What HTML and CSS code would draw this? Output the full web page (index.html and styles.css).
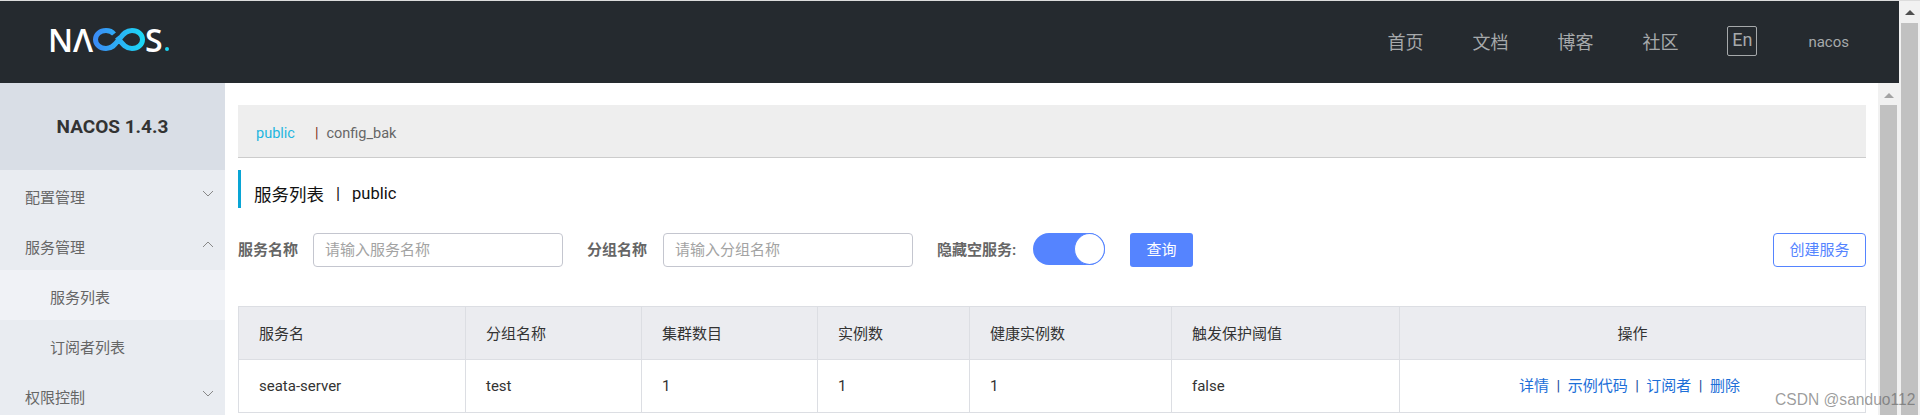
FILE: index.html
```html
<!DOCTYPE html>
<html lang="zh-CN">
<head>
<meta charset="UTF-8" />
<meta name="viewport" content="width=device-width, initial-scale=1" />
<title>Nacos</title>
<link rel="stylesheet" href="styles.css">
</head>
<body>
  <div class="app">
    <header class="topbar">
      <div class="logo">
        <span class="logo-letters">NΛ</span>
        <svg class="logo-loop" width="52" height="23" viewBox="0 0 52 23" aria-hidden="true">
          <defs>
            <linearGradient id="loopGrad" x1="0" y1="0" x2="1" y2="0">
              <stop offset="0" stop-color="#3b8cf5" />
              <stop offset="1" stop-color="#1cd6f5" />
            </linearGradient>
          </defs>
          <path d="M21 6C19 3.500 16.500 2.500 13 2.500C7 2.500 2.500 6.500 2.500 11.500C2.500 16.500 7 20.500 13 20.500C20 20.500 23 15 26 11.500C29 8 32 2.500 39 2.500C45 2.500 49.500 6.500 49.500 11.500C49.500 16.500 45 20.500 39 20.500C32 20.500 29 15 24 9" fill="none" stroke="url(#loopGrad)" stroke-width="5" />
        </svg>
        <span class="logo-letters">S</span>
        <span class="logo-dot"></span>
      </div>
      <nav class="topnav">
        <a class="nav-link">首页</a>
        <a class="nav-link">文档</a>
        <a class="nav-link">博客</a>
        <a class="nav-link">社区</a>
        <span class="lang">En</span>
        <span class="user">nacos</span>
      </nav>
    </header>
    <div class="layout">
      <aside class="sidebar">
        <div class="brand">NACOS 1.4.3</div>
        <div class="menu-item">配置管理
          <svg class="chevron" width="12" height="8" viewBox="0 0 12 8"><path d="M1 1l5 5 5-5" /></svg>
        </div>
        <div class="menu-item">服务管理
          <svg class="chevron" width="12" height="8" viewBox="0 0 12 8"><path d="M1 7l5-5 5 5" /></svg>
        </div>
        <div class="menu-item sub active">服务列表</div>
        <div class="menu-item sub">订阅者列表</div>
        <div class="menu-item">权限控制
          <svg class="chevron" width="12" height="8" viewBox="0 0 12 8"><path d="M1 1l5 5 5-5" /></svg>
        </div>
      </aside>
      <main class="content">
        <div class="namespaces">
          <a class="ns current">public</a>
          <span class="ns-sep">|</span>
          <a class="ns">config_bak</a>
        </div>
        <h1 class="page-title"><span class="title-cn">服务列表</span><span class="title-sep">|</span><span>public</span></h1>
        <form class="filters">
          <label class="field-label">服务名称</label>
          <input class="field field-name" placeholder="请输入服务名称">
          <label class="field-label group-label">分组名称</label>
          <input class="field field-group" placeholder="请输入分组名称">
          <label class="field-label hide-label">隐藏空服务:</label>
          <span class="switch"><span class="knob"></span></span>
          <button type="button" class="btn primary">查询</button>
          <button type="button" class="btn outline">创建服务</button>
        </form>
        <table class="services">
          <colgroup>
            <col class="c1"><col class="c2"><col class="c3"><col class="c4"><col class="c5"><col class="c6"><col class="c7">
          </colgroup>
          <thead>
            <tr>
              <th>服务名</th>
              <th>分组名称</th>
              <th>集群数目</th>
              <th>实例数</th>
              <th>健康实例数</th>
              <th>触发保护阈值</th>
              <th class="center">操作</th>
            </tr>
          </thead>
          <tbody>
            <tr>
              <td>seata-server</td>
              <td>test</td>
              <td>1</td>
              <td>1</td>
              <td>1</td>
              <td>false</td>
              <td class="center actions">
                <a>详情</a><i>|</i><a>示例代码</a><i>|</i><a>订阅者</a><i>|</i><a>删除</a>
              </td>
            </tr>
          </tbody>
        </table>
      </main>
      <div class="scrollbar inner">
        <span class="arrow"></span>
        <span class="thumb"></span>
      </div>
    </div>
  </div>
  <div class="scrollbar outer">
    <span class="arrow"></span>
    <span class="thumb"></span>
  </div>
  <div class="watermark">CSDN @sanduo112</div>
</body>
</html>
```

FILE: styles.css
```css
html, body {
  height: 100%;
}
body {
  margin: 0;
  border-top: 1px solid #dcdcdc;
  box-sizing: border-box;
  display: flex;
  overflow: hidden;
  background: #fff;
  font-family: Roboto, "Noto Sans CJK SC", sans-serif;
  color: #333;
}
.app {
  width: 1899px;
  display: flex;
  flex-direction: column;
  min-height: 0;
}
.topbar {
  height: 82px;
  flex: none;
  background: #252a2f;
  display: flex;
  justify-content: space-between;
  align-items: center;
}
.logo {
  margin-left: 48px;
  margin-top: -5px;
  display: flex;
  align-items: center;
  color: #fff;
  height: 23px;
}
.logo-letters {
  font-family: "Open Sans", sans-serif;
  font-weight: 600;
  font-size: 32px;
  line-height: 23px;
}
.logo-loop {
  flex: none;
}
.logo-dot {
  width: 4px;
  height: 4px;
  border-radius: 50%;
  background: #1cd6f5;
  align-self: flex-end;
  margin-left: 2px;
}
.topnav {
  display: flex;
  align-items: center;
  margin-right: 50px;
  color: #a6a9ab;
}
.nav-link {
  font-size: 18px;
  margin-right: 49px;
  padding-bottom: 2px;
}
.lang {
  width: 30px;
  height: 30px;
  box-sizing: border-box;
  border: 1px solid #a6a9ab;
  border-radius: 2px;
  font-size: 18px;
  line-height: 26px;
  text-align: center;
  margin: 0 51px 2px 0;
}
.user {
  font-size: 15px;
}
.layout {
  flex: 1;
  display: flex;
  min-height: 0;
}
.sidebar {
  width: 225px;
  flex: none;
  background: #e9ecf1;
  color: #666;
}
.brand {
  height: 87px;
  background: #d9dee6;
  color: #333;
  font-weight: 700;
  font-size: 19px;
  display: flex;
  align-items: center;
  justify-content: center;
}
.menu-item {
  height: 50px;
  padding: 2px 11px 0 25px;
  box-sizing: border-box;
  font-size: 15px;
  display: flex;
  align-items: center;
  justify-content: space-between;
}
.menu-item.sub {
  padding-left: 50px;
}
.menu-item.active {
  background: #f0f2f6;
}
.chevron {
  margin-top: -4px;
}
.chevron path {
  fill: none;
  stroke: #888;
  stroke-width: 1;
}
.content {
  flex: 1;
  min-width: 0;
  padding: 22px 12px 0 13px;
}
.namespaces {
  height: 53px;
  box-sizing: border-box;
  background: #eee;
  border-bottom: 1px solid #ccc;
  padding: 4px 0 0 18px;
  font-size: 14.5px;
  display: flex;
  align-items: center;
  color: #666;
}
.ns.current {
  color: #1fb6e0;
}
.ns-sep {
  margin: 0 8px 0 20px;
  color: #7a3324;
}
.page-title {
  margin: 12px 0 0;
  height: 38px;
  border-left: 3px solid #09a5d5;
  padding: 8px 0 0 13px;
  box-sizing: border-box;
  font-weight: 400;
  font-size: 16.5px;
  color: #111;
  display: flex;
  align-items: center;
}
.title-cn {
  font-size: 17.5px;
}
.title-sep {
  margin: 0 12px;
}
.filters {
  margin-top: 25px;
  display: flex;
  align-items: flex-start;
}
.field-label {
  font-size: 15px;
  font-weight: 700;
  color: #666;
  line-height: 34px;
  white-space: nowrap;
}
.field {
  height: 34px;
  box-sizing: border-box;
  border: 1px solid #c4c6cf;
  border-radius: 4px;
  padding: 0 10px 0 11px;
  font-family: inherit;
  font-size: 15px;
  color: #333;
  background: #fff;
}
.field::placeholder {
  color: #a3a3a3;
}
.field-name {
  width: 250px;
  margin-left: 15px;
}
.field-group {
  width: 250px;
  margin-left: 16px;
}
.group-label {
  margin-left: 24px;
}
.hide-label {
  margin-left: 24px;
  width: 81px;
}
.switch {
  width: 72px;
  height: 32px;
  margin-left: 15px;
  border-radius: 16px;
  background: #5584ff;
  display: flex;
  justify-content: flex-end;
  box-sizing: border-box;
}
.knob {
  width: 31px;
  height: 32px;
  box-sizing: border-box;
  border-radius: 50%;
  background: #fff;
  border: 1px solid #5584ff;
}
.btn {
  height: 34px;
  box-sizing: border-box;
  border-radius: 3px;
  font-family: inherit;
  font-size: 15px;
  padding: 0 0 3px;
}
.btn.primary {
  width: 63px;
  margin-left: 25px;
  background: #5584ff;
  border: 0;
  color: #fff;
}
.btn.outline {
  width: 93px;
  margin-left: auto;
  background: #fff;
  border: 1px solid #5584ff;
  border-radius: 4px;
  color: #5584ff;
}
.services {
  margin-top: 39px;
  width: 100%;
  table-layout: fixed;
  border-collapse: collapse;
  border-top: 1px solid #e6e7eb;
  font-size: 15px;
}
.c1 { width: 227px; }
.c2 { width: 176px; }
.c3 { width: 176px; }
.c4 { width: 152px; }
.c5 { width: 202px; }
.c6 { width: 228px; }
.services th,
.services td {
  height: 53px;
  box-sizing: border-box;
  border: 1px solid #dcdee3;
  padding: 0 20px;
  text-align: left;
  font-weight: 400;
  color: #333;
}
.services th {
  background: #ebecf0;
  padding-bottom: 2px;
}
.services .center {
  text-align: center;
}
.services .actions {
  padding: 0 26px 4px 20px;
}
.actions a {
  color: #1d6fd8;
}
.actions i {
  font-style: normal;
  margin: 0 7.500px;
  color: #1a4a9c;
}
.scrollbar {
  flex: none;
  width: 21px;
  background: #f1f1f1;
  display: flex;
  flex-direction: column;
  align-items: center;
}
.scrollbar .arrow {
  flex: none;
  width: 0;
  height: 0;
  margin: 10px 0 7px;
  border-left: 5px solid transparent;
  border-right: 5px solid transparent;
  border-bottom: 5px solid #a3a3a3;
}
.scrollbar.outer .arrow {
  margin: 9px 0 8px;
  border-bottom-color: #505050;
}
.scrollbar .thumb {
  flex: 1;
  width: 17px;
  background: #c1c1c1;
}
.watermark {
  position: absolute;
  left: 1775px;
  top: 390px;
  font-family: "Liberation Sans", sans-serif;
  font-size: 15.600px;
  line-height: 20px;
  color: rgba(90, 90, 90, 0.6);
  white-space: nowrap;
}
```
